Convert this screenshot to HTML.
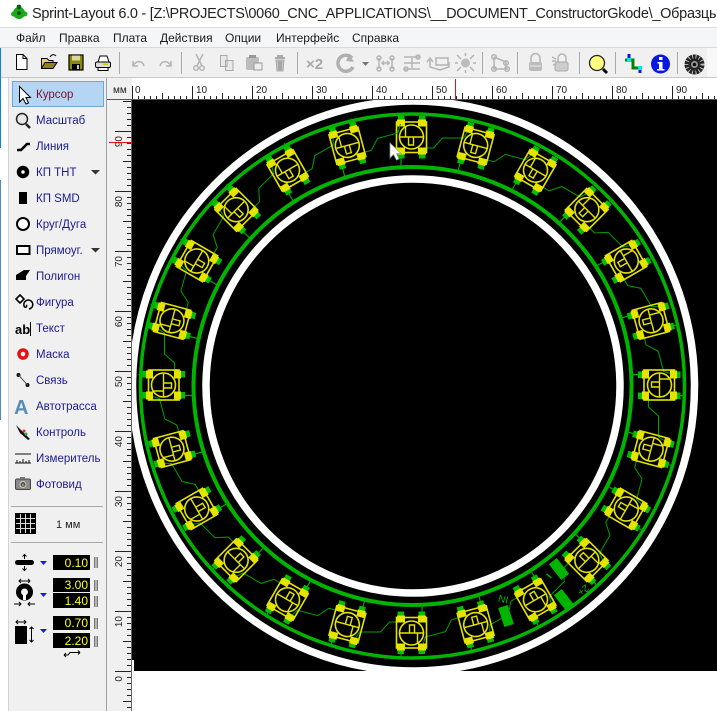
<!DOCTYPE html>
<html><head><meta charset="utf-8"><style>
html,body{margin:0;padding:0;background:#fff;width:717px;height:711px;overflow:hidden}
svg{display:block;font-family:"Liberation Sans","Noto Sans CJK SC",sans-serif}
.m{font-size:12px;fill:#1a1a1a}
.s{font-size:11.5px;fill:#1a1a90}
.r{font-size:10px;fill:#222}
.v{font-size:12px;fill:#ffff20;text-anchor:end}
.g{fill:none;stroke:#b4b4b4;stroke-width:1.5}
.gf{fill:#bcbcbc}
</style></head><body>
<svg width="717" height="711" viewBox="0 0 717 711" xmlns="http://www.w3.org/2000/svg">
<defs>
<clipPath id="cv"><rect x="132" y="100" width="585" height="571"/></clipPath>
<g id="c">
<path d="M10.500-15V-25M-10.500 15V29" stroke="#00a800" stroke-width="1.200" fill="none"/>
<path d="M11 11H22L31 1H52L57-7" stroke="#00a000" stroke-width="1" fill="none"/>
<g fill="#00c000"><rect x="-13.500" y="-21" width="6.500" height="6"/><rect x="7.500" y="-21" width="6.500" height="6"/><rect x="-13.500" y="15" width="6.500" height="6.500"/><rect x="7.500" y="15" width="6.500" height="6.500"/></g>
<g fill="#e4e400"><rect x="-14.500" y="-17.500" width="8" height="7"/><rect x="6.500" y="-17.500" width="8" height="7"/><rect x="-14.500" y="10.500" width="8" height="7"/><rect x="6.500" y="10.500" width="8" height="7"/></g>
<rect x="-15" y="-15" width="30" height="30.500" fill="none" stroke="#e4e400" stroke-width="1.600"/>
<circle r="12" fill="none" stroke="#e4e400" stroke-width="1.600"/>
<path d="M-12 0H12M-6-11V0M-3 0V8H2V0" fill="none" stroke="#e4e400" stroke-width="1.400"/>
</g>
</defs>

<rect width="717" height="711" fill="#fff"/>
<rect x="0" y="27" width="717" height="21" fill="#f5f6f7"/>
<rect x="0" y="27" width="717" height="1" fill="#dcdcdc"/>
<rect x="0" y="47" width="717" height="31" fill="#f0f0f0"/>
<rect x="0" y="47" width="717" height="1" fill="#dadada"/>
<rect x="0" y="77" width="717" height="1" fill="#c8c8c8"/>
<rect x="707" y="48" width="10" height="29" fill="#f8f8f8"/>
<rect x="0" y="48" width="1" height="100" fill="#0a84d8"/>
<rect x="0" y="180" width="1" height="240" fill="#4a8ec0"/>

<circle cx="13.500" cy="14" r="2.500" fill="#20b020"/><circle cx="25" cy="14" r="2.500" fill="#20b020"/>
<circle cx="19" cy="13" r="6" fill="#18a818"/><circle cx="19" cy="7" r="2.400" fill="#0a600a"/><circle cx="19" cy="13" r="1.800" fill="#063c06"/>
<text x="32" y="18" font-size="14.500" letter-spacing="-.28" fill="#222">Sprint-Layout 6.0 - [Z:\PROJECTS\0060_CNC_APPLICATIONS\__DOCUMENT_ConstructorGkode\_Образцы</text>

<g class="m">
<text x="16" y="42">Файл</text><text x="59" y="42">Правка</text><text x="113" y="42">Плата</text><text x="160" y="42">Действия</text><text x="225" y="42">Опции</text><text x="276" y="42">Интерфейс</text><text x="352" y="42">Справка</text>
</g>

<path d="M119.500 52V74M181.500 52V74M297.500 52V74M482.500 52V74M517.500 52V74M579.500 52V74M615.500 52V74M677.500 52V74" stroke="#a8a8a8" stroke-width="1"/>

<path d="M16.500 54.500H23L27 58.500V69.500H16.500Z" fill="#fff" stroke="#000" stroke-width="1"/><path d="M23 54.500V58.500H27" fill="none" stroke="#000"/>
<path d="M41.500 58.500H47L49 60.500H53V68.500H41.500Z" fill="#e8d060" stroke="#000"/><path d="M41.500 68.500L45 62.500H57L53 68.500Z" fill="#908020" stroke="#000"/>
<path d="M50 57C52 54 54 54 56 56" fill="none" stroke="#000"/>
<rect x="69" y="55" width="14" height="15" fill="#8a8a10" stroke="#000" stroke-width="1.200"/><rect x="72" y="55.500" width="8" height="5" fill="#d8d8a0"/><rect x="72" y="64" width="8" height="6" fill="#000"/><rect x="77" y="65" width="2" height="4" fill="#ccc"/>
<path d="M98 62L100 56H107L109 62Z" fill="#fff" stroke="#000"/><rect x="95.500" y="62" width="15" height="5.500" rx="1.500" fill="#ddd" stroke="#000"/><rect x="98" y="67.500" width="10" height="3" fill="#fff" stroke="#000"/><rect x="103" y="63.500" width="5" height="1.500" fill="#d8c020"/>
<path d="M133 61V66H138M133.500 65C137 60 143 61 144 66" class="g"/>
<path d="M171 61V66H166M170.500 65C167 60 161 61 160 66" class="g"/>
<path d="M196 54L202 66M203 54L197 66" class="g"/><circle cx="196" cy="68" r="2.300" class="g"/><circle cx="202" cy="68" r="2.300" class="g"/>
<path d="M220.500 55.500H227V66.500H220.500ZM225.500 60.500H233V70.500H225.500Z" fill="#e8e8e8" stroke="#aaa"/>
<rect x="246" y="57" width="13" height="13" rx="2" class="gf"/><rect x="249" y="55" width="7" height="3" fill="#999"/><rect x="254" y="63" width="8" height="7" fill="#eee" stroke="#999"/>
<path d="M275 58H285M277 56H283" stroke="#aaa" stroke-width="2"/><path d="M276 60H284L283 71H277Z" fill="#c4c4c4" stroke="#a8a8a8"/><path d="M279 61V70M281 61V70" stroke="#888"/>
<text x="306" y="69" font-size="15" font-weight="bold" fill="#a8a8a8">×2</text>
<path d="M352 58A8 8 0 1 0 353 67" fill="none" stroke="#b0b0b0" stroke-width="3.500"/><path d="M349 54L354 62L346 61Z" fill="#b0b0b0"/>
<path d="M362 62H369L365.500 66Z" fill="#777"/>
<path d="M379 58V69M392 58V69M382 63H389M384 61L382 63L384 65M387 61L389 63L387 65" class="g"/><circle cx="379" cy="58" r="2" class="g"/><circle cx="392" cy="58" r="2" class="g"/><circle cx="379" cy="69" r="2" class="g"/><circle cx="392" cy="69" r="2" class="g"/>
<path d="M404 57H420M404 63H420M404 69H420M412 58V68" class="g"/><circle cx="406" cy="69" r="2" class="g"/><circle cx="418" cy="57" r="2" class="g"/>
<path d="M430 60V67L440 70L449 67V62M436 58H448V65H436ZM427 62L430 58L433 62" class="g"/>
<circle cx="465.500" cy="63" r="4.500" class="gf"/><path d="M457 55L461 59M474 55L470 59M457 71L461 67M474 71L470 67M465.500 53V56M465.500 70V73M455 63H458M473 63H476" class="g"/>
<path d="M494 57L506 62M494 57V69H508M506 62V69" class="g"/><circle cx="494" cy="57" r="2.300" class="g"/><circle cx="506" cy="63" r="2.300" class="g"/><circle cx="494" cy="69" r="2.300" class="g"/><circle cx="507" cy="69" r="2.300" class="g"/>
<path d="M531 62V58A4 4 0 0 1 540 58V62" class="g"/><rect x="529" y="62" width="13" height="9" rx="2" class="gf"/><path d="M530 66H541" stroke="#eee"/>
<path d="M558 62V58A4 4 0 0 1 566 58V62" class="g"/><rect x="555" y="62" width="13" height="9" rx="2" fill="#ccc" stroke="#aaa"/><path d="M552 57L556 59M552 61L556 61M553 65L556 64" class="g"/>
<circle cx="597" cy="63" r="7.500" fill="#ffff80" stroke="#222" stroke-width="1.300"/><path d="M603 69L607 73" stroke="#000" stroke-width="3"/>
<path d="M625 60H633V68H642" fill="none" stroke="#088008" stroke-width="3"/><path d="M629 54V60M640 68V73" stroke="#0818e0" stroke-width="3" fill="none"/><rect x="627" y="58" width="4" height="4" fill="#00e8e8"/><rect x="638" y="66" width="4" height="4" fill="#00e8e8"/>
<circle cx="660.500" cy="64" r="9.500" fill="#0818e0"/><rect x="659" y="57" width="3.500" height="3" fill="#fff"/><path d="M657.500 62H662.500V69H664.500V70.500H657V69H659V63.500H657.500Z" fill="#fff"/>
<circle cx="694.500" cy="64.500" r="10" fill="#222"/><circle cx="694.500" cy="64.500" r="8" fill="none" stroke="#bbb" stroke-dasharray="1 2.500" stroke-width="4"/><circle cx="694.500" cy="64.500" r="3.500" fill="#999"/><circle cx="694.500" cy="64.500" r="1.800" fill="#111"/>

<rect x="8" y="78" width="98" height="633" fill="#f0f0f0"/>
<rect x="8" y="78" width="1" height="633" fill="#d4d4d4"/>
<rect x="106" y="78" width="1" height="633" fill="#a0a0a0"/>
<rect x="107" y="78" width="25" height="633" fill="#f0f0f0"/>
<rect x="12.500" y="81.500" width="91" height="25" fill="#b4d5f3" stroke="#6aa6dc"/>

<g class="s">
<text x="36" y="98" style="fill:#7a1030">Курсор</text>
<text x="36" y="124">Масштаб</text><text x="36" y="150">Линия</text><text x="36" y="176">КП ТНТ</text><text x="36" y="202">КП SMD</text><text x="36" y="228">Круг/Дуга</text><text x="36" y="254">Прямоуг.</text><text x="36" y="280">Полигон</text><text x="36" y="306">Фигура</text><text x="36" y="332">Текст</text><text x="36" y="358">Маска</text><text x="36" y="384">Связь</text><text x="36" y="410">Автотрасса</text><text x="36" y="436">Контроль</text><text x="36" y="462">Измеритель</text><text x="36" y="488">Фотовид</text>
</g>

<path d="M19.500 86.500V102L23 98.500L26 104L28.500 103L26 97.500H30.500Z" fill="#fff" stroke="#000"/>
<circle cx="22" cy="119" r="5.500" fill="#e8e8e8" stroke="#222" stroke-width="1.500"/><path d="M26 124L30 128" stroke="#222" stroke-width="2.500"/>
<path d="M17 150H21L27 144H30" fill="none" stroke="#000" stroke-width="2.600"/>
<circle cx="23" cy="172" r="4" fill="#fff" stroke="#000" stroke-width="4.500"/>
<rect x="19" y="192" width="8" height="12" fill="#000"/>
<circle cx="23" cy="224" r="6" fill="#fff" stroke="#000" stroke-width="2"/>
<rect x="17" y="246" width="12.500" height="8" fill="#fff" stroke="#000" stroke-width="2"/>
<path d="M16 280V275L24 270H30L26 276V280Z" fill="#000"/>
<path d="M91 170H100L95.500 174.500ZM91 248H100L95.500 252.500Z" fill="#333"/>
<path d="M20 295L24 299L20 303L16 299Z" fill="#fff" stroke="#000" stroke-width="1.600"/><path d="M29 309A4.500 4.500 0 1 0 24 306C25 309 28 306 26 305" fill="none" stroke="#000" stroke-width="1.500"/>
<text x="15" y="334" font-size="13" font-weight="bold" fill="#000">ab</text><rect x="30" y="322" width="1" height="14" fill="#000"/>
<circle cx="23" cy="354" r="4" fill="#fff" stroke="#e81010" stroke-width="3.500"/>
<circle cx="18.500" cy="375" r="2" fill="#111"/><circle cx="27.500" cy="385" r="2" fill="#111"/><path d="M18.500 375L27.500 385" stroke="#555"/>
<text x="14" y="414" font-size="20" font-weight="bold" fill="#5a8cb4">A</text>
<path d="M16 425L30 439L28 440L20 433Z" fill="#111"/><circle cx="24" cy="431" r="1.500" fill="#e03030"/><circle cx="26" cy="434" r="1.500" fill="#30b030"/>
<path d="M15 454H31M15 463H31" stroke="#111"/><path d="M17 463V460M20 463V461M23 463V459M26 463V461M29 463V460" stroke="#111"/>
<rect x="15.500" y="479" width="15" height="10.500" rx="1.500" fill="#8a8a8a" stroke="#444"/><circle cx="23" cy="484.500" r="3" fill="#555" stroke="#ccc"/><rect x="20" y="477" width="5" height="2" fill="#777"/><circle cx="23" cy="485" r="1" fill="#d8a020"/>

<rect x="11" y="506" width="92" height="1" fill="#a8a8a8"/>
<rect x="11" y="542" width="92" height="1" fill="#a8a8a8"/>
<rect x="15" y="513" width="21" height="21" fill="#000"/>
<path d="M20.500 514V533M25.500 514V533M30.500 514V533M16 518.500H35M16 523.500H35M16 528.500H35" stroke="#ddd" stroke-width="1"/>
<text x="56" y="528" font-size="11" fill="#222">1 мм</text>

<rect x="15" y="560" width="19" height="5" rx="2.500" fill="#000"/>
<path d="M24.500 555V559M24.500 566V570M22.500 556.500L24.500 554.500L26.500 556.500M22.500 568.500L24.500 570.500L26.500 568.500" stroke="#000" fill="none"/>
<circle cx="24.500" cy="592" r="6" fill="none" stroke="#000" stroke-width="5"/><rect x="23" y="594" width="3" height="6" fill="#fff"/>
<path d="M19 581H30M21 579L19 581L21 583M28 579L30 581L28 583M14 604H21M19 602L21 604L19 606M28 604H35M30 602L28 604L30 606" stroke="#000" fill="none"/>
<rect x="15" y="626" width="12" height="18" fill="#000"/>
<path d="M16 622H26M18 620L16 622L18 624M24 620L26 622L24 624M31.500 627V642M29.500 629L31.500 627L33.500 629M29.500 640L31.500 642L33.500 640" stroke="#000" fill="none"/>
<path d="M40 561H47L43.500 565ZM40 593H47L43.500 597ZM40 629H47L43.500 633Z" fill="#1818e0"/>

<g fill="#000"><rect x="53" y="555" width="37" height="15"/><rect x="53" y="578" width="37" height="14"/><rect x="53" y="593" width="37" height="15"/><rect x="53" y="616" width="37" height="14"/><rect x="53" y="633" width="37" height="15"/></g>
<g class="v"><text x="88" y="567">0.10</text><text x="88" y="589">3.00</text><text x="88" y="605">1.40</text><text x="88" y="627">0.70</text><text x="88" y="645">2.20</text></g>
<g fill="#777"><rect x="94" y="557" width="1.500" height="11"/><rect x="96.500" y="557" width="1.500" height="11"/><rect x="94" y="580" width="1.500" height="11"/><rect x="96.500" y="580" width="1.500" height="11"/><rect x="94" y="596" width="1.500" height="11"/><rect x="96.500" y="596" width="1.500" height="11"/><rect x="94" y="618" width="1.500" height="11"/><rect x="96.500" y="618" width="1.500" height="11"/><rect x="94" y="636" width="1.500" height="11"/><rect x="96.500" y="636" width="1.500" height="11"/></g>
<path d="M64 655H68L70 652.500H80M64 655L66 653M64 655L66 657M80 652.500L78 650.500M80 652.500L78 654.500" stroke="#000" fill="none"/>

<rect x="107" y="99" width="610" height="1" fill="#555"/>
<rect x="131" y="100" width="1" height="611" fill="#666"/>
<line x1="132" y1="97.500" x2="717" y2="97.500" stroke="#222" stroke-width="3" stroke-dasharray="1 5"/>
<line x1="132" y1="96" x2="717" y2="96" stroke="#222" stroke-width="6" stroke-dasharray="1 29"/>
<line x1="132" y1="92.500" x2="717" y2="92.500" stroke="#222" stroke-width="13" stroke-dasharray="1 59"/>
<line x1="129" y1="711" x2="129" y2="100" stroke="#222" stroke-width="4" stroke-dasharray="1 5" stroke-dashoffset="-3"/>
<line x1="127" y1="711" x2="127" y2="100" stroke="#222" stroke-width="8" stroke-dasharray="1 29" stroke-dashoffset="-9"/>
<line x1="123" y1="711" x2="123" y2="100" stroke="#222" stroke-width="16" stroke-dasharray="1 59" stroke-dashoffset="-39"/>

<text x="113" y="93" class="r">мм</text>
<g class="r"><text x="135" y="93">0</text><text x="196" y="93">10</text><text x="256" y="93">20</text><text x="316" y="93">30</text><text x="376" y="93">40</text><text x="436" y="93">50</text><text x="496" y="93">60</text><text x="556" y="93">70</text><text x="616" y="93">80</text><text x="676" y="93">90</text></g>
<g class="r" text-anchor="end">
<text transform="translate(122,136) rotate(-90)">90</text><text transform="translate(122,196) rotate(-90)">80</text><text transform="translate(122,256) rotate(-90)">70</text><text transform="translate(122,316) rotate(-90)">60</text><text transform="translate(122,376) rotate(-90)">50</text><text transform="translate(122,436) rotate(-90)">40</text><text transform="translate(122,496) rotate(-90)">30</text><text transform="translate(122,556) rotate(-90)">20</text><text transform="translate(122,616) rotate(-90)">10</text><text transform="translate(122,676) rotate(-90)">0</text>
</g>
<rect x="109" y="142" width="23" height="1" fill="#e81010"/>
<rect x="455" y="79" width="1" height="20" fill="#e81010"/>

<rect x="132" y="100" width="585" height="571" fill="#000"/>
<g clip-path="url(#cv)">
<ellipse cx="413.500" cy="386" rx="281" ry="285" fill="none" stroke="#fff" stroke-width="7.500"/>
<circle cx="413" cy="386" r="207" fill="none" stroke="#fff" stroke-width="7.500"/>
<circle cx="412.500" cy="386" r="272" fill="none" stroke="#00b400" stroke-width="3.500"/>
<circle cx="412.500" cy="386" r="219" fill="none" stroke="#00b400" stroke-width="4"/>
<g>
<use href="#c" transform="rotate(0 411.500 385) translate(411.500 137)"/>
<use href="#c" transform="rotate(15 411.500 385) translate(411.500 137)"/>
<use href="#c" transform="rotate(30 411.500 385) translate(411.500 137)"/>
<use href="#c" transform="rotate(45 411.500 385) translate(411.500 137)"/>
<use href="#c" transform="rotate(60 411.500 385) translate(411.500 137)"/>
<use href="#c" transform="rotate(75 411.500 385) translate(411.500 137)"/>
<use href="#c" transform="rotate(90 411.500 385) translate(411.500 137)"/>
<use href="#c" transform="rotate(105 411.500 385) translate(411.500 137)"/>
<use href="#c" transform="rotate(120 411.500 385) translate(411.500 137)"/>
<use href="#c" transform="rotate(135 411.500 385) translate(411.500 137)"/>
<use href="#c" transform="rotate(150 411.500 385) translate(411.500 137)"/>
<use href="#c" transform="rotate(165 411.500 385) translate(411.500 137)"/>
<use href="#c" transform="rotate(180 411.500 385) translate(411.500 137)"/>
<use href="#c" transform="rotate(195 411.500 385) translate(411.500 137)"/>
<use href="#c" transform="rotate(210 411.500 385) translate(411.500 137)"/>
<use href="#c" transform="rotate(225 411.500 385) translate(411.500 137)"/>
<use href="#c" transform="rotate(240 411.500 385) translate(411.500 137)"/>
<use href="#c" transform="rotate(255 411.500 385) translate(411.500 137)"/>
<use href="#c" transform="rotate(270 411.500 385) translate(411.500 137)"/>
<use href="#c" transform="rotate(285 411.500 385) translate(411.500 137)"/>
<use href="#c" transform="rotate(300 411.500 385) translate(411.500 137)"/>
<use href="#c" transform="rotate(315 411.500 385) translate(411.500 137)"/>
<use href="#c" transform="rotate(330 411.500 385) translate(411.500 137)"/>
<use href="#c" transform="rotate(345 411.500 385) translate(411.500 137)"/>
</g>
<g fill="#00b400">
<rect x="-5" y="-10" width="10" height="20" transform="translate(506 616) rotate(-18)"/>
<rect x="-5" y="-10" width="10" height="20" transform="translate(559 569) rotate(-38)"/>
<rect x="-5" y="-10" width="10" height="20" transform="translate(564 600) rotate(-38)"/>
<text font-size="10" transform="translate(509 597) rotate(194)">IN</text>
<text font-size="10" transform="translate(586 584) rotate(145)">2+</text>
<rect x="-3" y="-.7" width="6" height="1.400" transform="translate(549 576) rotate(-140)"/>
</g>
<path d="M390 143V158L393.500 154.500L396.500 160L399 159L396.500 153.500H401Z" fill="#fff" stroke="#999" stroke-width=".7"/>
</g>
<rect x="132" y="660" width="2" height="11" fill="#fff"/>
</svg>
</body></html>
